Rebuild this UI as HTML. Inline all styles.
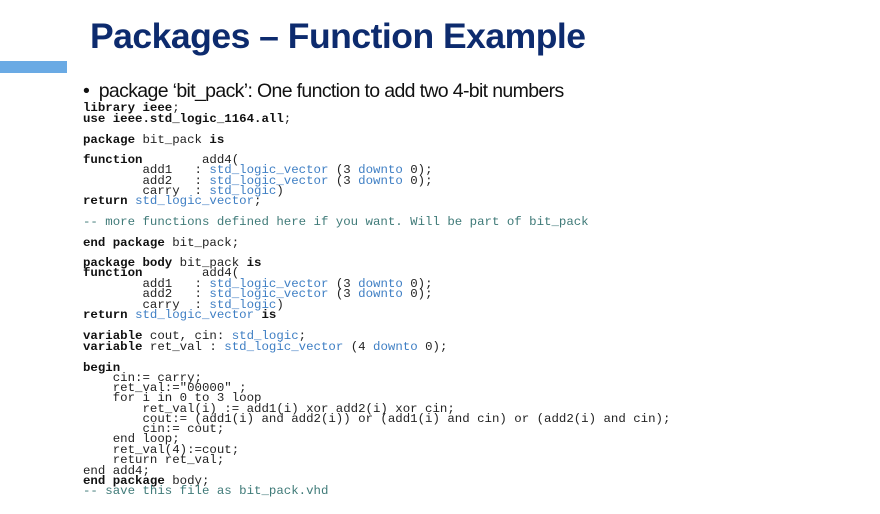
<!DOCTYPE html>
<html><head><meta charset="utf-8"><style>
body{margin:0;width:880px;height:514px;background:#fff;position:relative;overflow:hidden;font-family:"Liberation Sans",sans-serif}
.t{position:absolute;left:90px;top:16px;font-size:35.5px;font-weight:bold;color:#0d2b6e;letter-spacing:-0.5px;white-space:nowrap}
.bar{position:absolute;left:0;top:61px;width:67px;height:12px;background:#6aaae4}
.b{position:absolute;left:83px;top:80px;font-size:19.5px;color:#111;white-space:nowrap;letter-spacing:-0.65px}
.c{position:absolute;left:83px;font-family:"Liberation Mono",monospace;font-size:12.4px;line-height:12px;white-space:pre;color:#222}
.c b{color:#111}
.ty{color:#3f7fc4}
.cm{color:#3f7a78}
</style></head><body>
<div class="t">Packages – Function Example</div>
<div class="bar"></div>
<div class="b">• &nbsp;package ‘bit_pack’: One function to add two 4-bit numbers</div>
<div class="c" style="top:102px"><b>library</b> <b>ieee</b>;</div>
<div class="c" style="top:113px"><b>use</b> <b>ieee.std_logic_1164.all</b>;</div>
<div class="c" style="top:134px"><b>package</b> bit_pack <b>is</b></div>
<div class="c" style="top:154px"><b>function</b>        add4(</div>
<div class="c" style="top:164px">        add1   : <span class="ty">std_logic_vector</span> (3 <span class="ty">downto</span> 0);</div>
<div class="c" style="top:175px">        add2   : <span class="ty">std_logic_vector</span> (3 <span class="ty">downto</span> 0);</div>
<div class="c" style="top:185px">        carry  : <span class="ty">std_logic</span>)</div>
<div class="c" style="top:195px"><b>return</b> <span class="ty">std_logic_vector</span>;</div>
<div class="c cm" style="top:216px">-- more functions defined here if you want. Will be part of bit_pack</div>
<div class="c" style="top:237px"><b>end</b> <b>package</b> bit_pack;</div>
<div class="c" style="top:257px"><b>package</b> <b>body</b> bit_pack <b>is</b></div>
<div class="c" style="top:267px"><b>function</b>        add4(</div>
<div class="c" style="top:278px">        add1   : <span class="ty">std_logic_vector</span> (3 <span class="ty">downto</span> 0);</div>
<div class="c" style="top:288px">        add2   : <span class="ty">std_logic_vector</span> (3 <span class="ty">downto</span> 0);</div>
<div class="c" style="top:299px">        carry  : <span class="ty">std_logic</span>)</div>
<div class="c" style="top:309px"><b>return</b> <span class="ty">std_logic_vector</span> <b>is</b></div>
<div class="c" style="top:330px"><b>variable</b> cout, cin: <span class="ty">std_logic</span>;</div>
<div class="c" style="top:341px"><b>variable</b> ret_val : <span class="ty">std_logic_vector</span> (4 <span class="ty">downto</span> 0);</div>
<div class="c" style="top:362px"><b>begin</b></div>
<div class="c" style="top:372px">    cin:= carry;</div>
<div class="c" style="top:382px">    ret_val:="00000" ;</div>
<div class="c" style="top:392px">    for i in 0 to 3 loop</div>
<div class="c" style="top:403px">        ret_val(i) := add1(i) xor add2(i) xor cin;</div>
<div class="c" style="top:413px">        cout:= (add1(i) and add2(i)) or (add1(i) and cin) or (add2(i) and cin);</div>
<div class="c" style="top:423px">        cin:= cout;</div>
<div class="c" style="top:433px">    end loop;</div>
<div class="c" style="top:444px">    ret_val(4):=cout;</div>
<div class="c" style="top:454px">    return ret_val;</div>
<div class="c" style="top:465px">end add4;</div>
<div class="c" style="top:475px"><b>end</b> <b>package</b> body;</div>
<div class="c cm" style="top:485px">-- save this file as bit_pack.vhd</div>
</body></html>
